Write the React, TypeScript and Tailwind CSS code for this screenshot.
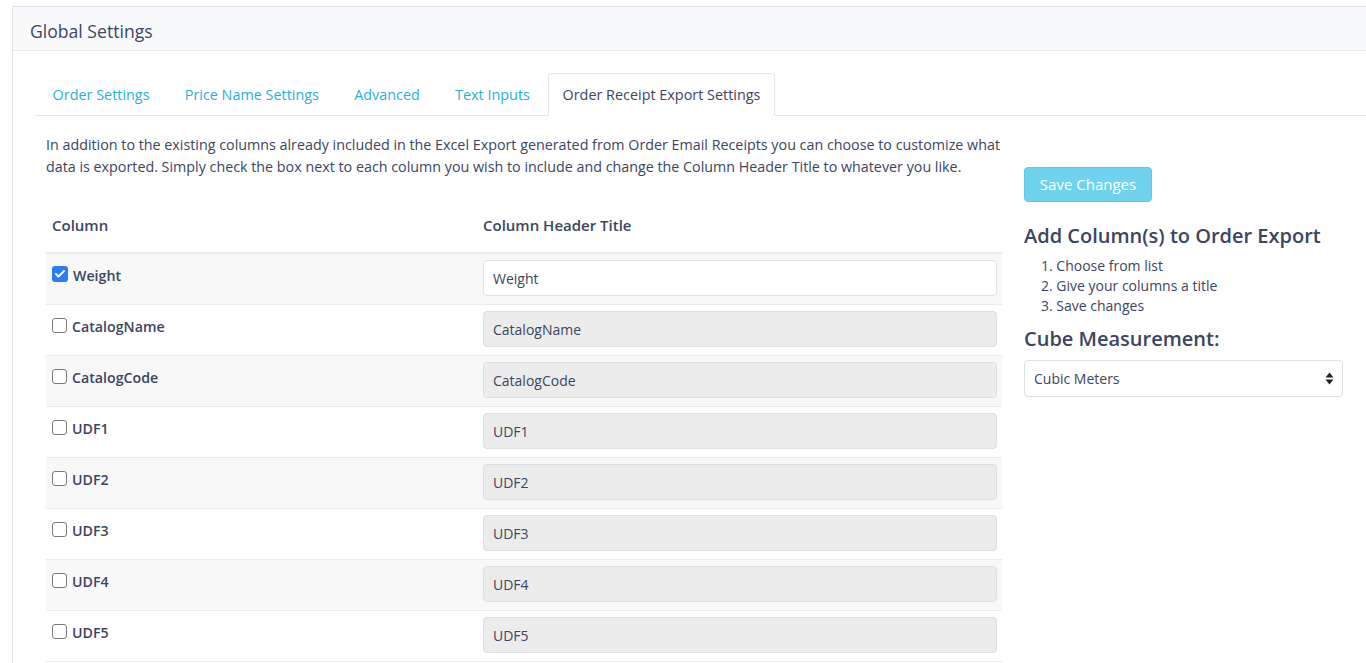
import { Check } from "lucide-react";

const tabs = ["Order Settings", "Price Name Settings", "Advanced", "Text Inputs", "Order Receipt Export Settings"];

const rows = [
  { name: "Weight", checked: true },
  { name: "CatalogName", checked: false },
  { name: "CatalogCode", checked: false },
  { name: "UDF1", checked: false },
  { name: "UDF2", checked: false },
  { name: "UDF3", checked: false },
  { name: "UDF4", checked: false },
  { name: "UDF5", checked: false },
];

function Box({ checked }: { checked: boolean }) {
  if (checked) {
    return (
      <span className="mt-[1px] w-[16px] h-[16px] rounded-[3px] bg-[#2c7cf5] flex items-center justify-center shrink-0">
        <Check className="w-[12px] h-[12px] text-white" strokeWidth={4} />
      </span>
    );
  }
  return <span className="mt-[2px] w-[15px] h-[15px] rounded-[3px] border border-[#7a7a7a] bg-white shrink-0" />;
}

export default function App() {
  return (
    <div
      className="h-[663px] overflow-hidden bg-white pt-[6px] pl-[12px] text-[#3c4561]"
      style={{ fontFamily: '"Open Sans", "Noto Sans", sans-serif' }}
    >
      <div className="border-l border-t border-[#dfe2e8] h-[700px]">
        <div className="h-[44px] bg-[#f8f9fb] border-b border-[#e6e9ee] pl-[17px] pt-[5px] flex items-center text-[17.6px]">
          Global Settings
        </div>

        <div className="pl-[22px] pt-[22px]">
          <ul className="flex border-b border-[#e4e7ec]">
            {tabs.map((t, i) => {
              const active = i === tabs.length - 1;
              return (
                <li key={t} className="-mb-px">
                  <span
                    className={
                      active
                        ? "block px-[14px] py-[10px] leading-[21px] text-[14.4px] border border-[#e2e5ea] border-b-white rounded-t-[4px] bg-white text-[#3c4561]"
                        : "block px-[16.6px] py-[10px] leading-[21px] text-[14.4px] border border-transparent text-[#27b1d9]"
                    }
                  >
                    {t}
                  </span>
                </li>
              );
            })}
          </ul>

          <div className="pl-[11px] pt-[18px] flex gap-[22px]">
            <div className="w-[956px] shrink-0">
              <p className="text-[14.3px] leading-[22px]">
                In addition to the existing columns already included in the Excel Export generated from Order Email Receipts you can choose to customize what data is exported. Simply check the box next to each column you wish to include and change the Column Header Title to whatever you like.
              </p>

              <div className="mt-[28px]">
                <div className="flex border-b-2 border-[#e9ebef] text-[15px] font-semibold">
                  <div className="w-[431px] px-[6px] pt-[8px] pb-[16px] leading-[22px]">Column</div>
                  <div className="flex-1 px-[6px] pt-[8px] pb-[16px] leading-[22px]">Column Header Title</div>
                </div>
                {rows.map((r, i) => (
                  <div
                    key={r.name}
                    className={`flex h-[51px] border-b border-[#e9ebef] ${i % 2 === 0 ? "bg-[#f8f8f8]" : "bg-white"}`}
                  >
                    <div className="w-[431px] px-[6px] pt-[11px] flex gap-[5px]">
                      <Box checked={r.checked} />
                      <span className="text-[14.2px] font-semibold leading-[22px]">{r.name}</span>
                    </div>
                    <div className="flex-1 pl-[6px] pr-[5px] pt-[6px]">
                      <div
                        className={`h-[36px] rounded-[4px] border border-[#dcdfe5] px-[9px] flex items-center text-[14px] ${r.checked ? "bg-white" : "bg-[#ececec]"}`}
                      >
                        {r.name}
                      </div>
                    </div>
                  </div>
                ))}
              </div>
            </div>

            <div className="w-[319px] shrink-0 pt-[33px]">
              <button className="h-[35px] w-[128px] rounded-[4px] bg-[#6fd3ee] border border-[#5dc8e6] text-white text-[15px]">
                Save Changes
              </button>
              <h3 className="mt-[21px] text-[20px] font-semibold leading-[26px]">Add Column(s) to Order Export</h3>
              <ol className="mt-[7px] pl-[17px] text-[14px] leading-[20px]">
                <li>1. Choose from list</li>
                <li>2. Give your columns a title</li>
                <li>3. Save changes</li>
              </ol>
              <h3 className="mt-[10px] text-[20px] font-semibold leading-[26px]">Cube Measurement:</h3>
              <div className="mt-[8px] h-[37px] rounded-[4px] border border-[#dcdfe5] bg-white pl-[9px] pr-[8px] flex items-center justify-between text-[14px]">
                <span>Cubic Meters</span>
                <svg width="9" height="13" viewBox="0 0 9 13">
                  <path d="M4.5 0.5 L8.5 5.5 H0.5 Z" fill="#222" />
                  <path d="M4.5 12.5 L8.5 7.5 H0.5 Z" fill="#222" />
                </svg>
              </div>
            </div>
          </div>
        </div>
      </div>
    </div>
  );
}
